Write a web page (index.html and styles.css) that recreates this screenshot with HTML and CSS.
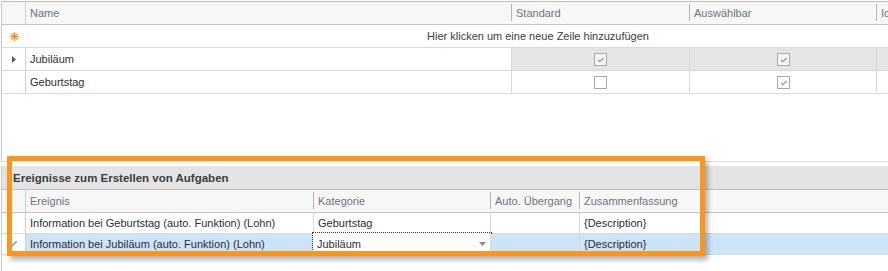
FILE: index.html
```html
<!DOCTYPE html>
<html lang="de">
  <head>
    <meta charset="UTF-8">
    <title>Ereignisse</title>
    <link rel="stylesheet" href="styles.css">
  </head>

  <body>
    <div class="grid top-grid">
      <div class="row head">
        <div class="cell ind"></div>
        <div class="cell hcell w-name">Name</div>
        <div class="cell hcell w-std">Standard</div>
        <div class="cell hcell w-ausw">Auswählbar</div>
        <div class="cell hcell w-id">Id</div>
      </div>

      <div class="row new-row">
        <div class="cell ind">
          <svg width="9" height="9" viewBox="0 0 9 9">
            <g stroke="#f7931e" stroke-width="1.2">
              <line x1="4.5" y1="0" x2="4.5" y2="9"/>
              <line x1="0" y1="4.5" x2="9" y2="4.5"/>
              <line x1="1.3" y1="1.3" x2="7.7" y2="7.7"/>
              <line x1="7.7" y1="1.3" x2="1.3" y2="7.7"/>
            </g>
            <circle cx="4.5" cy="4.5" r="2.2" fill="#f7931e"/>
          </svg>
        </div>
        <div class="cell new-text">Hier klicken um eine neue Zeile hinzuzufügen</div>
      </div>

      <div class="row data focused">
        <div class="cell ind">
          <svg width="4" height="7" viewBox="0 0 4 7">
            <polygon points="0,0 4,3.5 0,7" fill="#5a5a5a"/>
          </svg>
        </div>
        <div class="cell w-name">Jubiläum</div>
        <div class="cell w-std gray center"><span class="check on"></span></div>
        <div class="cell w-ausw gray center"><span class="check on"></span></div>
        <div class="cell w-id gray"></div>
      </div>

      <div class="row data">
        <div class="cell ind"></div>
        <div class="cell w-name">Geburtstag</div>
        <div class="cell w-std center"><span class="check"></span></div>
        <div class="cell w-ausw center"><span class="check on"></span></div>
        <div class="cell w-id"></div>
      </div>
    </div>

    <div class="grid bottom-grid">
      <div class="group-panel">Ereignisse zum Erstellen von Aufgaben</div>

      <div class="row head small">
        <div class="cell ind"></div>
        <div class="cell hcell w-event">Ereignis</div>
        <div class="cell hcell w-cat">Kategorie</div>
        <div class="cell hcell w-auto">Auto. Übergang</div>
        <div class="cell hcell w-sum">Zusammenfassung</div>
      </div>

      <div class="row data small">
        <div class="cell ind"></div>
        <div class="cell w-event">Information bei Geburtstag (auto. Funktion) (Lohn)</div>
        <div class="cell w-cat">Geburtstag</div>
        <div class="cell w-auto"></div>
        <div class="cell w-sum">{Description}</div>
      </div>

      <div class="row data small selected">
        <div class="cell ind">
          <svg width="8" height="8" viewBox="0 0 8 8">
            <path d="M1 7 L1.4 5.4 L6 0.8 L7.2 2 L2.6 6.6 Z" fill="#9a9a9a"/>
          </svg>
        </div>
        <div class="cell w-event">Information bei Jubiläum (auto. Funktion) (Lohn)</div>
        <div class="cell w-cat editor">
          <span>Jubiläum</span>
          <svg class="drop" width="7" height="4" viewBox="0 0 7 4">
            <polygon points="0,0 7,0 3.5,4" fill="#8c8c8c"/>
          </svg>
        </div>
        <div class="cell w-auto"></div>
        <div class="cell w-sum">{Description}</div>
      </div>
    </div>

    <div class="highlight"></div>
  </body>
</html>
```

FILE: styles.css
```css
body {
  margin: 0;
  width: 888px;
  height: 271px;
  overflow: hidden;
  background-color: #ffffff;
  font-family: "Liberation Sans", Arial, sans-serif;
  font-size: 11px;
  color: #2e2e38;
}

.grid {
  width: 887px;
  margin-left: 1px;
  border-left: 1px solid #c8c8c8;
  box-sizing: border-box;
  overflow: hidden;
}

.top-grid {
  height: 161px;
  border-top: 1px solid #bdbdbd;
  border-bottom: 1px solid #dedede;
  margin-top: 1px;
}

.bottom-grid {
  margin-top: 4px;
  height: 105px;
}

.row {
  display: flex;
  height: 23px;
  border-bottom: 1px solid #d9d9d9;
  box-sizing: border-box;
}

.row.small {
  height: 21px;
}

.row.head {
  height: 23px;
  background-color: #f7f7f7;
  border-bottom: 1px solid #c4c4c4;
}

.cell {
  display: flex;
  align-items: center;
  flex-shrink: 0;
  box-sizing: border-box;
  padding-left: 4px;
  border-right: 1px solid #d9d9d9;
  white-space: nowrap;
  overflow: hidden;
}

.cell.ind {
  width: 24px;
  padding: 0;
  justify-content: center;
  border-right: 1px solid #d0d0d0;
  background-color: #ffffff;
}

.head .cell.ind {
  background-color: #f7f7f7;
}

.hcell {
  color: #6f7380;
  margin: 2px 0 3px;
  border-right-color: #b4b4b4;
}

.w-name { width: 486px; }
.w-std { width: 178px; }
.w-ausw { width: 187px; }
.w-id { flex: 1; flex-shrink: 1; min-width: 0; border-right: none; }

.w-event { width: 288px; }
.w-cat { width: 177px; }
.w-auto { width: 89px; }
.w-sum { flex: 1; flex-shrink: 1; min-width: 0; border-right: none; }

.new-row .cell.ind {
  border-right: none;
}

.new-text {
  flex: 1;
  flex-shrink: 1;
  min-width: 0;
  justify-content: center;
  padding: 0 0 0 162px;
  border-right: none;
  color: #3b3b45;
}

.gray {
  background-color: #e5e5e5;
}

.center {
  justify-content: center;
  padding: 0;
}

.check {
  display: block;
  width: 13px;
  height: 13px;
  box-sizing: border-box;
  border: 1px solid #a9a9a9;
  background-color: #ffffff;
}

.gray .check {
  background-color: #f4f4f4;
}

.check.on {
  background-image: url("data:image/svg+xml;utf8,<svg xmlns='http://www.w3.org/2000/svg' width='11' height='11'><path d='M3 6 L4.8 7.8 L8.5 4' stroke='%23909090' stroke-width='1.1' fill='none'/></svg>");
  background-repeat: no-repeat;
}

.group-panel {
  height: 24px;
  box-sizing: border-box;
  padding-left: 11px;
  display: flex;
  align-items: center;
  font-size: 11.5px;
  font-weight: bold;
  color: #3c3c3c;
  background-color: #e4e4e4;
  border-bottom: 1px solid #c0c0c0;
}

.row.selected .cell {
  background-color: #cce4f7;
}

.row.selected .cell.ind {
  background-color: #ffffff;
}

.row.selected .cell.editor {
  justify-content: space-between;
  padding-right: 4px;
  background-color: #ffffff;
  outline: 1px dotted #3a3a3a;
  margin-left: -1px;
  width: 178px;
  margin-top: -1px;
  height: 22px;
}

.highlight {
  position: absolute;
  left: 7px;
  top: 156px;
  width: 698px;
  height: 100px;
  box-sizing: border-box;
  border: 5px solid #f7981d;
  box-shadow: 3px 4px 5px rgba(0, 0, 0, 0.3);
}
```
